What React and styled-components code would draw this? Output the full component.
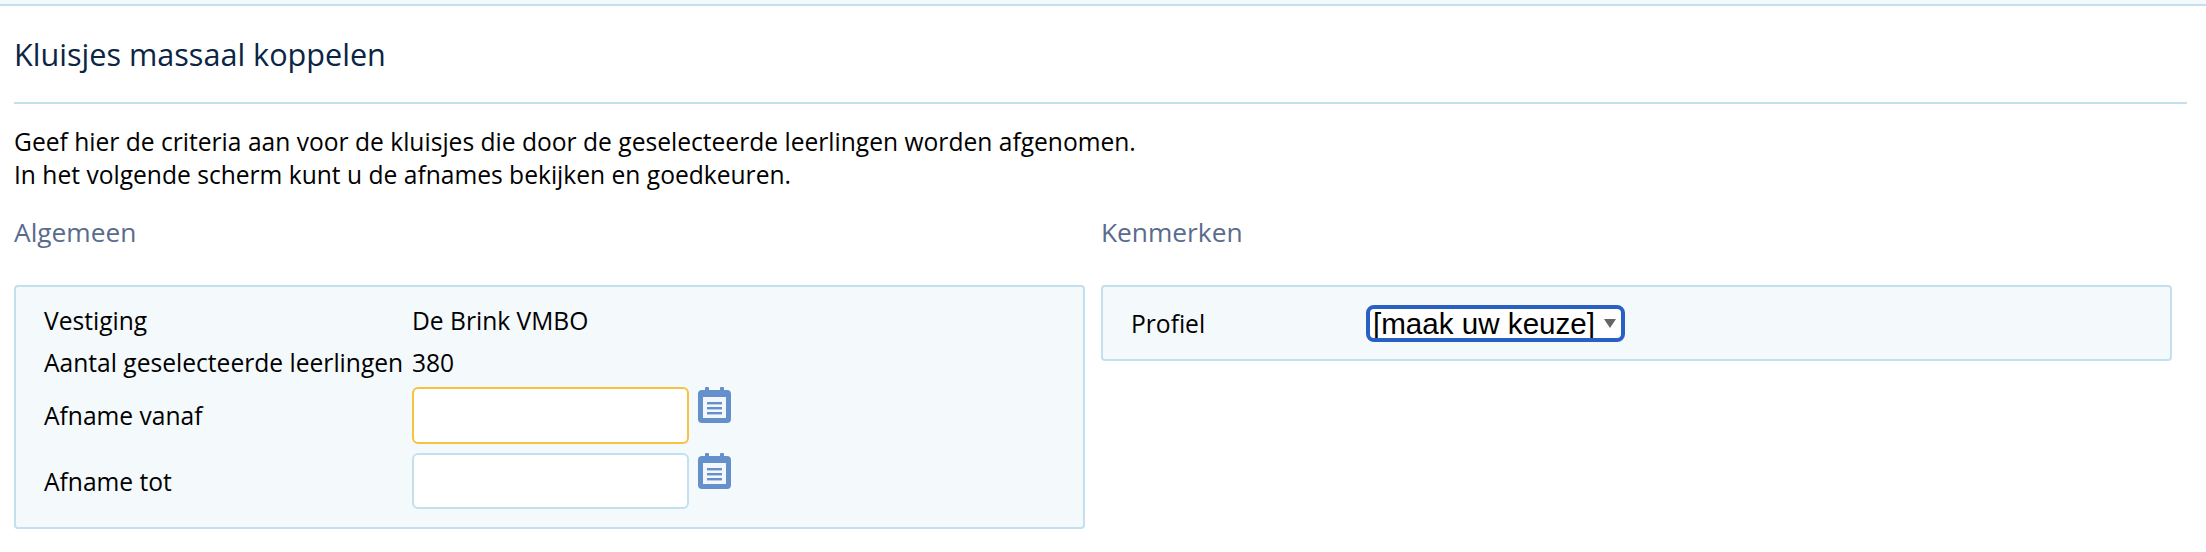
import React from "react";
import styled, { createGlobalStyle } from "styled-components";

const Global = createGlobalStyle`
  html, body { margin: 0; padding: 0; background: #fff; }
  body { font-family: "Open Sans", "Liberation Sans", sans-serif; color: #000; }
`;
const TopBand = styled.div`
  height: 4px;
  background: #f4f9fc;
  border-bottom: 2px solid #c3e0ef;
`;
const Page = styled.main`
  padding: 0 19px 0 14px;
`;
const Title = styled.h1`
  margin: 0;
  height: 96px;
  display: flex;
  align-items: center;
  font-size: 30.6px;
  font-weight: 400;
  color: #0b2545;
  border-bottom: 2px solid #c3e0ef;
`;
const Intro = styled.p`
  margin: 22px 0 0;
  font-size: 24.6px;
  line-height: 32.5px;
  height: 65px;
`;
const Columns = styled.div`
  display: grid;
  grid-template-columns: 1071px 1071px;
  column-gap: 16px;
  align-items: start;
  margin-top: 19px;
`;
const Heading = styled.h2`
  margin: 0 0 31px;
  height: 44px;
  display: flex;
  align-items: center;
  font-size: 26.3px;
  font-weight: 400;
  color: #5a6b8c;
`;
const Panel = styled.section`
  box-sizing: border-box;
  background: #f4f9fc;
  border: 2px solid #c3e0ef;
  border-radius: 4px;
  padding: ${(p) => p.$pad};
  display: grid;
  grid-template-columns: ${(p) => p.$cols};
  align-items: start;
`;
const Label = styled.div`
  box-sizing: border-box;
  font-size: 24.6px;
  line-height: 1;
  white-space: nowrap;
  height: ${(p) => p.$h || 42}px;
  margin-top: ${(p) => p.$mt || 0}px;
  padding-top: ${(p) => p.$nudge || 0}px;
  display: flex;
  align-items: center;
`;
const Field = styled.div`
  display: flex;
  align-items: flex-start;
  gap: 9px;
  margin-top: ${(p) => p.$mt || 0}px;
`;
const DateInput = styled.input`
  box-sizing: border-box;
  width: 277px;
  height: ${(p) => p.$h}px;
  background: #fff;
  border: 2px solid ${(p) => (p.$active ? "#f7c23f" : "#c3e0ef")};
  border-radius: 6px;
  outline: none;
  padding: 0 8px;
  font: inherit;
`;
const CalendarSvg = styled.svg`
  width: 33px;
  height: 36px;
  flex: none;
  display: block;
`;
const SelectBox = styled.div`
  box-sizing: border-box;
  width: 259px;
  height: 37px;
  background: #fff;
  border: 4px solid #2a5fc4;
  border-radius: 8px;
  display: flex;
  align-items: center;
  justify-content: space-between;
  padding: 0 5px 0 3px;
  font-family: "Liberation Sans", Arial, sans-serif;
  font-size: 29.6px;
  line-height: 29px;
  white-space: nowrap;
  overflow: hidden;
`;
const Caret = styled.span`
  width: 0;
  height: 0;
  border-left: 6px solid transparent;
  border-right: 6px solid transparent;
  border-top: 9px solid #666;
`;

const Calendar = () => (
  <CalendarSvg viewBox="0 0 33 36" aria-hidden="true">
    <path fill="#6490cb" d="M4 3h3V1a1 1 0 0 1 1-1h2a1 1 0 0 1 1 1v2h11V1a1 1 0 0 1 1-1h2a1 1 0 0 1 1 1v2h3a4 4 0 0 1 4 4v25a4 4 0 0 1-4 4H4a4 4 0 0 1-4-4V7a4 4 0 0 1 4-4z" />
    <rect x="5" y="10" width="23" height="21" fill="#f3f7fc" />
    <rect x="9" y="15" width="15" height="2.4" fill="#6490cb" />
    <rect x="9" y="20" width="15" height="2.4" fill="#6490cb" />
    <rect x="9" y="25" width="15" height="2.4" fill="#6490cb" />
  </CalendarSvg>
);

export default function App() {
  return (
    <>
      <Global />
      <TopBand />
      <Page>
        <Title>Kluisjes massaal koppelen</Title>
        <Intro>
          Geef hier de criteria aan voor de kluisjes die door de geselecteerde leerlingen worden afgenomen.
          <br />
          In het volgende scherm kunt u de afnames bekijken en goedkeuren.
        </Intro>
        <Columns>
          <div>
            <Heading>Algemeen</Heading>
            <Panel $pad="13px 28px 18px" $cols="368px 1fr">
              <Label>Vestiging</Label>
              <Label>De Brink VMBO</Label>
              <Label>Aantal geselecteerde leerlingen</Label>
              <Label>380</Label>
              <Label $h={57} $mt={3} $nudge={2}>Afname vanaf</Label>
              <Field $mt={3}>
                <DateInput $active $h={57} aria-label="Afname vanaf" />
                <Calendar />
              </Field>
              <Label $h={56} $mt={9} $nudge={2}>Afname tot</Label>
              <Field $mt={9}>
                <DateInput $h={56} aria-label="Afname tot" />
                <Calendar />
              </Field>
            </Panel>
          </div>
          <div>
            <Heading>Kenmerken</Heading>
            <Panel $pad="18px 28px 17px" $cols="235px 1fr">
              <Label $h={37} $nudge={2}>Profiel</Label>
              <SelectBox>
                [maak uw keuze]
                <Caret />
              </SelectBox>
            </Panel>
          </div>
        </Columns>
      </Page>
    </>
  );
}
